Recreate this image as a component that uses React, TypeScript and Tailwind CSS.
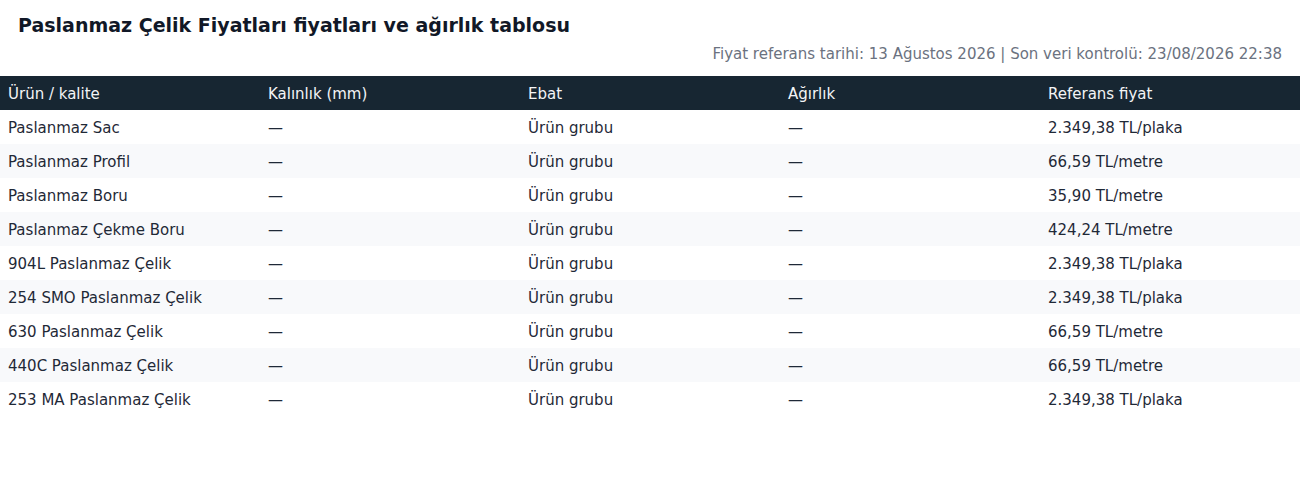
import React from "react";

const rows: [string, string, string, string, string][] = [
  ["Paslanmaz Sac", "—", "Ürün grubu", "—", "2.349,38 TL/plaka"],
  ["Paslanmaz Profil", "—", "Ürün grubu", "—", "66,59 TL/metre"],
  ["Paslanmaz Boru", "—", "Ürün grubu", "—", "35,90 TL/metre"],
  ["Paslanmaz Çekme Boru", "—", "Ürün grubu", "—", "424,24 TL/metre"],
  ["904L Paslanmaz Çelik", "—", "Ürün grubu", "—", "2.349,38 TL/plaka"],
  ["254 SMO Paslanmaz Çelik", "—", "Ürün grubu", "—", "2.349,38 TL/plaka"],
  ["630 Paslanmaz Çelik", "—", "Ürün grubu", "—", "66,59 TL/metre"],
  ["440C Paslanmaz Çelik", "—", "Ürün grubu", "—", "66,59 TL/metre"],
  ["253 MA Paslanmaz Çelik", "—", "Ürün grubu", "—", "2.349,38 TL/plaka"],
];

const headers = ["Ürün / kalite", "Kalınlık (mm)", "Ebat", "Ağırlık", "Referans fiyat"];

export default function App() {
  return (
    <div className="w-[1300px] bg-white font-['DejaVu_Sans',sans-serif]">
      <div className="px-[18px] pt-[14px]">
        <h1 className="text-[19px] leading-[22px] font-bold text-[#111827]">
          Paslanmaz Çelik Fiyatları fiyatları ve ağırlık tablosu
        </h1>
        <div className="mt-[7px] text-right text-[15px] leading-[22px] text-[#6b7280]">
          Fiyat referans tarihi: 13 Ağustos 2026 | Son veri kontrolü: 23/08/2026 22:38
        </div>
      </div>
      <div className="mt-[11px]">
        <div className="grid grid-cols-5 h-[34px] pt-[2px] items-center bg-[#172632] text-[15px] text-[#f3f4f6]">
          {headers.map((h) => (
            <div key={h} className="px-2">{h}</div>
          ))}
        </div>
        {rows.map((r, i) => (
          <div
            key={i}
            className={`grid grid-cols-5 h-[34px] pt-[2px] items-center text-[15px] text-[#1f2937] ${
              i % 2 === 1 ? "bg-[#f8f9fb]" : "bg-white"
            }`}
          >
            {r.map((c, j) => (
              <div key={j} className="px-2">{c}</div>
            ))}
          </div>
        ))}
      </div>
    </div>
  );
}
